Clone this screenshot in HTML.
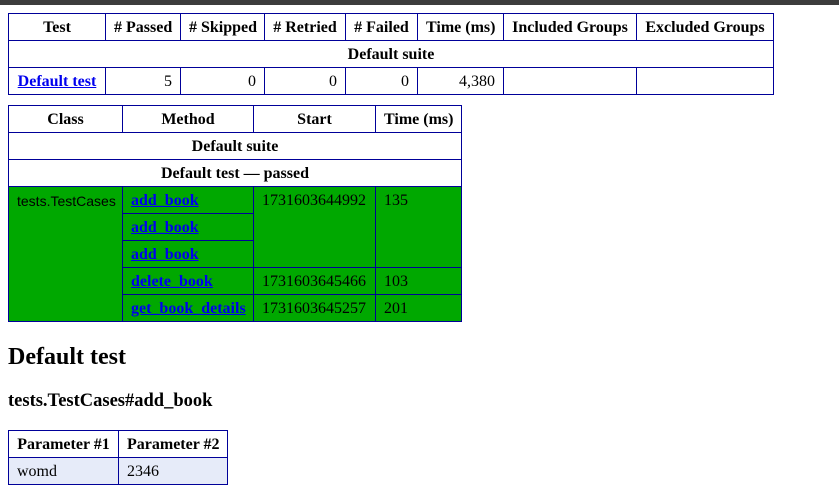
<!DOCTYPE html>
<html><head><meta charset="utf-8"><style>
body{margin:0;background:#fff;font-family:"Liberation Serif",serif;font-size:16px;color:#000}
.bar{height:5px;background:#3c3c3c}
table{border-collapse:collapse;table-layout:fixed;position:absolute;left:8px}
td,th{border:1px solid #009;padding:2px 8px 0;height:26px;box-sizing:border-box;white-space:nowrap;overflow:hidden}
th{font-weight:bold;text-align:center}
.num{text-align:right}
a{color:#00e;font-weight:bold;text-decoration:underline}
.g td{background:#00a800;vertical-align:top;padding-top:5px;height:27px}
.g td.sans{font-family:"Liberation Sans",sans-serif;font-size:14px;padding-top:6px}
h2{position:absolute;left:8px;top:344px;margin:0;font-size:24px}
h3{position:absolute;left:8px;top:391px;margin:0;font-size:18.5px}
.p td{background:#e6ebf9}
</style></head><body>
<div class="bar"></div>
<table style="top:13px;width:765px">
<colgroup><col style="width:97px"><col style="width:75px"><col style="width:84px"><col style="width:81px"><col style="width:72px"><col style="width:86px"><col style="width:133px"><col style="width:137px"></colgroup>
<tr style="height:27px"><th>Test</th><th># Passed</th><th># Skipped</th><th># Retried</th><th># Failed</th><th>Time (ms)</th><th>Included Groups</th><th>Excluded Groups</th></tr>
<tr style="height:27px"><th colspan="8">Default suite</th></tr>
<tr style="height:27px"><th><a href="#">Default test</a></th><td class="num">5</td><td class="num">0</td><td class="num">0</td><td class="num">0</td><td class="num">4,380</td><td></td><td></td></tr>
</table>
<table style="top:105px;width:453px">
<colgroup><col style="width:114px"><col style="width:131px"><col style="width:122px"><col style="width:86px"></colgroup>
<tr style="height:27px"><th>Class</th><th>Method</th><th>Start</th><th>Time (ms)</th></tr>
<tr style="height:27px"><th colspan="4">Default suite</th></tr>
<tr style="height:27px"><th colspan="4">Default test — passed</th></tr>
<tbody class="g">
<tr><td rowspan="5" class="sans">tests.TestCases</td><td><a href="#">add_book</a></td><td rowspan="3">1731603644992</td><td rowspan="3">135</td></tr>
<tr><td><a href="#">add_book</a></td></tr>
<tr><td><a href="#">add_book</a></td></tr>
<tr><td><a href="#">delete_book</a></td><td>1731603645466</td><td>103</td></tr>
<tr><td><a href="#">get_book_details</a></td><td>1731603645257</td><td>201</td></tr>
</tbody>
</table>
<h2>Default test</h2>
<h3>tests.TestCases#add_book</h3>
<table style="top:430px;width:219px">
<colgroup><col style="width:110px"><col style="width:109px"></colgroup>
<tr style="height:27px"><th>Parameter #1</th><th>Parameter #2</th></tr>
<tr class="p" style="height:27px"><td>womd</td><td>2346</td></tr>
</table>
</body></html>
